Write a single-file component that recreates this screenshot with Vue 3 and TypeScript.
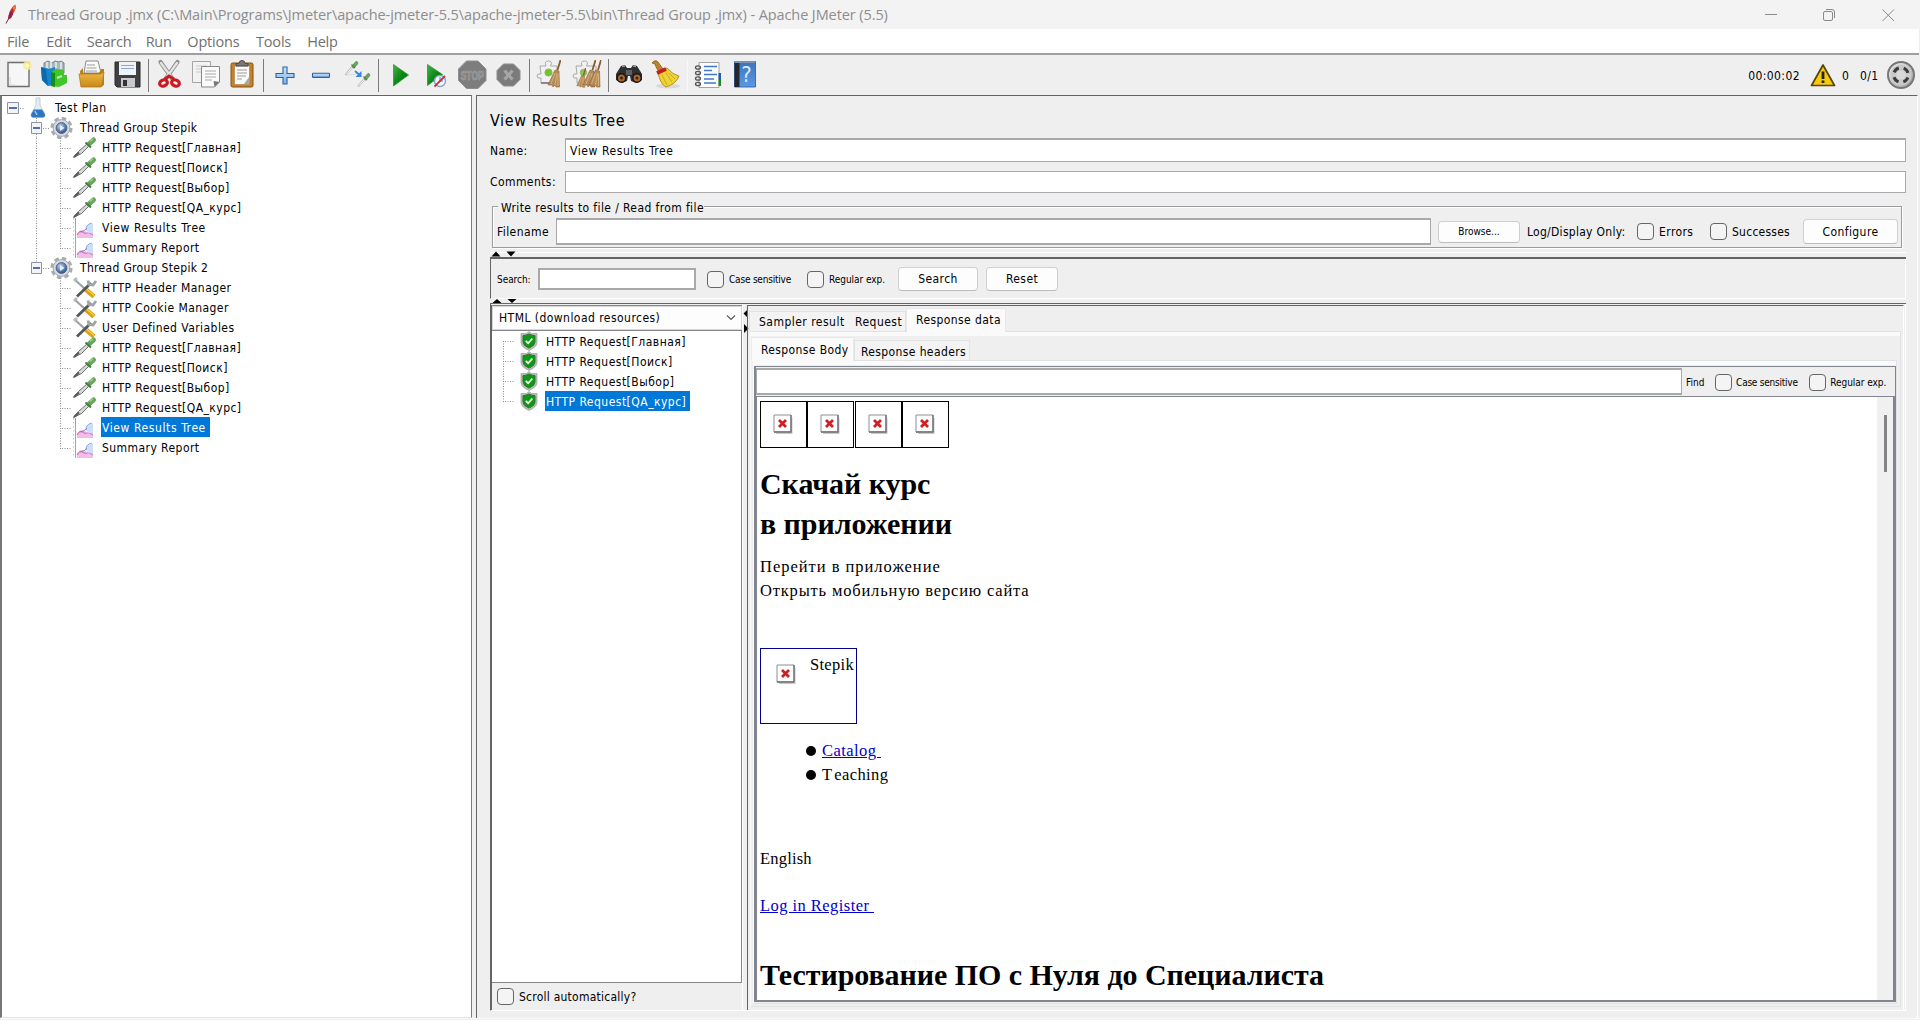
<script setup lang="ts">
type Kind = 'plan' | 'group' | 'sampler' | 'config' | 'listener'

interface TreeNode {
  label: string
  kind: Kind
  inFirstGroup?: boolean
  last?: boolean
  selected?: boolean
}

const menu = ['File', 'Edit', 'Search', 'Run', 'Options', 'Tools', 'Help']

const samplers = ['HTTP Request[Главная]', 'HTTP Request[Поиск]', 'HTTP Request[Выбор]', 'HTTP Request[QA_курс]']

const tree: TreeNode[] = [
  { label: 'Test Plan', kind: 'plan' },
  { label: 'Thread Group Stepik', kind: 'group' },
  ...samplers.map((label): TreeNode => ({ label, kind: 'sampler', inFirstGroup: true })),
  { label: 'View Results Tree', kind: 'listener', inFirstGroup: true },
  { label: 'Summary Report', kind: 'listener', inFirstGroup: true, last: true },
  { label: 'Thread Group Stepik 2', kind: 'group', last: true },
  { label: 'HTTP Header Manager', kind: 'config' },
  { label: 'HTTP Cookie Manager', kind: 'config' },
  { label: 'User Defined Variables', kind: 'config' },
  ...samplers.map((label): TreeNode => ({ label, kind: 'sampler' })),
  { label: 'View Results Tree', kind: 'listener', selected: true },
  { label: 'Summary Report', kind: 'listener', last: true },
]

const indent: Record<Kind, number> = { plan: 52, group: 75, sampler: 99, config: 99, listener: 99 }
const selectedResult = 3
</script>

<template>
  <div class="window">
    <svg class="defs" width="0" height="0" aria-hidden="true">
      <defs>
        <linearGradient id="silver" x1="0" y1="0" x2="1" y2="1">
          <stop offset="0" stop-color="#f4f4f4" /><stop offset="1" stop-color="#9a9a9a" />
        </linearGradient>
        <linearGradient id="gold" x1="0" y1="0" x2="0" y2="1">
          <stop offset="0" stop-color="#efb848" /><stop offset="1" stop-color="#c88a17" />
        </linearGradient>
        <linearGradient id="leaf" x1="0" y1="0" x2="1" y2="1">
          <stop offset="0" stop-color="#4caf50" /><stop offset=".5" stop-color="#0b8a17" /><stop offset="1" stop-color="#0a6a12" />
        </linearGradient>
        <linearGradient id="blueplus" x1="0" y1="0" x2="0" y2="1">
          <stop offset="0" stop-color="#cfe4f8" /><stop offset="1" stop-color="#7fb2e6" />
        </linearGradient>
        <linearGradient id="book" x1="0" y1="0" x2="0" y2="1">
          <stop offset="0" stop-color="#3c74bd" /><stop offset="1" stop-color="#5b98e8" />
        </linearGradient>
        <radialGradient id="lens" cx=".4" cy=".35" r=".7">
          <stop offset="0" stop-color="#c5d6ee" /><stop offset=".6" stop-color="#5d80b8" /><stop offset="1" stop-color="#27457c" />
        </radialGradient>
        <symbol id="broken" viewBox="0 0 20 20">
          <path d="M3 20h15.500V4" fill="none" stroke="#c9c9c9" stroke-width="2" />
          <path d="M1 1h17v17H1z" fill="#fff" stroke="#8a8f94" />
          <path d="M18 1v17H1" fill="none" stroke="#6f6f6f" stroke-width="1.300" />
          <path d="M6 6l7 7M13 6l-7 7" stroke="#cf1f22" stroke-width="2.800" />
        </symbol>
        <symbol id="shield" viewBox="0 0 18 20">
          <path d="M9 .5l2.500 2h5.500v9q0 4.500-8 8-8-3.500-8-8v-9h5.500z" fill="#b9beb9" stroke="#9ba19b" stroke-width=".7" />
          <path d="M9 3q3 1.600 6 1.600v6.500q0 3.500-6 6-6-2.500-6-6V4.600Q6 4.600 9 3z" fill="#0a9a12" stroke="#3c6c3c" stroke-width="1" />
          <path d="M5.800 9.800l2.300 2.400 4.200-4.600" fill="none" stroke="#fff" stroke-width="1.700" />
        </symbol>
        <symbol id="broom" viewBox="0 0 14 28">
          <path d="M13.500 0l-3 10" stroke="#8b5a2b" stroke-width="1.800" />
          <path d="M8 10l4 1 .5 16H9l-1-2-2 2-1-2H1z" fill="#b58a58" stroke="#8b6337" stroke-width=".6" />
          <path d="M8 13l-4 11M10 13l-2 12M11 14l0 12" stroke="#e0c08c" stroke-width=".7" />
        </symbol>
      </defs>
    </svg>

    <header class="titlebar">
      <svg class="feather" width="14" height="22" viewBox="0 0 14 22">
        <path d="M1 20.500l3.500-6.500" stroke="#7a1f52" stroke-width="1" />
        <path d="M3 16.500Q4 6 9.500 2q2.500 1 .5 5L6 15z" fill="#c62a33" />
        <path d="M3 16.500q.5-5 2.500-8.500l2.500 3-2 4z" fill="#8c2158" />
        <path d="M7.500 4.500l2.500-3q2 1 .3 4.500l-1.500 2z" fill="#ec7a2b" />
      </svg>
      <span class="title">Thread Group .jmx (C:\Main\Programs\Jmeter\apache-jmeter-5.5\apache-jmeter-5.5\bin\Thread Group .jmx) - Apache JMeter (5.5)</span>
      <svg class="winctl" width="150" height="28" viewBox="0 0 150 28" fill="none" stroke="#8a8a8a">
        <path d="M15 13.500h12" />
        <rect x="73.500" y="10.500" width="9" height="9" rx="1.500" />
        <path d="M76 8.500h6q2.500 0 2.500 2.500v6" />
        <path d="M132.500 8.500l11.500 11.500M144 8.500l-11.500 11.500" />
      </svg>
    </header>

    <nav class="menubar"><span v-for="m in menu" :key="m">{{ m }}</span></nav>

    <div class="toolbar">
      <svg viewBox="0 0 36 36"><path d="M7 5.500h21v24H7z" fill="#f6f6f6" stroke="#6d6d6d" stroke-width="1.400" /><path d="M9 20v8h5" stroke="#d5d5d5" fill="none" /><circle cx="26.500" cy="8.500" r="4.500" fill="#f6ee94" opacity=".85" /><circle cx="26.500" cy="8.500" r="2" fill="#fff8b8" /></svg>
      <svg viewBox="0 0 36 36"><path d="M7 10V6l4-2 4 2 3-2 4 1 2-1 3 2v10H7z" fill="#a8b8bd" stroke="#72858c" /><path d="M10 5v6M14 4v7M19 5v6M24 5v7" stroke="#e8f0f2" stroke-width="1.500" /><path d="M4 10l8 2 6-2v18l-7 1-6-6z" fill="#1487cf" /><path d="M4 10l5 2 2 17-6-6z" fill="#0c69aa" /><path d="M14 15l5-3 8 1v5h3v8l-8 4-8-1z" fill="#41c52b" /><path d="M14 15l4 1v14l-4-1z" fill="#158d18" /><path d="M20 21l5-2" stroke="#bff0a8" stroke-width="2" /></svg>
      <svg viewBox="0 0 36 36"><path d="M11 16l2-12h12l3 12z" fill="#fbfbfb" stroke="#8a8a8a" /><path d="M14 8h8M13.500 11h10M13 14h11" stroke="#9b9b9b" /><path d="M7 14l3-3v5h16l2-4h3v16l-3 2H8z" fill="#b98015" /><path d="M6 17h21l4-2-2 14-1 1H8z" fill="url(#gold)" stroke="#a87516" stroke-width=".7" /></svg>
      <svg viewBox="0 0 36 36"><path d="M6 5h25v25H8l-2-2z" fill="#3e4043" stroke="#28292b" /><path d="M10 5h17v13H10z" fill="#eef3f9" /><path d="M12 8.500h13M12 11.500h13" stroke="#8aa9d2" stroke-width="1.200" /><path d="M12 21h14v9H12z" fill="#c7c9cc" /><path d="M14 23h4v6h-4z" fill="#333" /></svg>
      <i class="sep"></i>
      <svg viewBox="0 0 36 36"><path d="M8.500 5l12 17M25.500 5l-12 17" stroke="#8e8e8e" stroke-width="4.200" stroke-linecap="round" /><path d="M9 6l11 15M25 6L14 21" stroke="#e3e3e3" stroke-width="2.400" stroke-linecap="round" /><g fill="none" stroke="#cb1a20" stroke-width="3.200"><ellipse cx="11.500" cy="26" rx="4" ry="3" transform="rotate(-22 11.500 26)" /><ellipse cx="23.500" cy="26" rx="4" ry="3" transform="rotate(22 23.500 26)" /></g><path d="M13 22l4-3 5 3" stroke="#cb1a20" stroke-width="3" fill="none" /></svg>
      <svg viewBox="0 0 36 36"><path d="M4.500 4.500h18v21h-18z" fill="#f2f2f2" stroke="#a5a5a5" /><path d="M8 9h11M8 12h11M8 15h6" stroke="#c9c9c9" /><path d="M13.500 9.500h18V25l-5 5h-13z" fill="#fafafa" stroke="#888" /><path d="M17 14h11M17 17h11M17 20h11M17 23h7" stroke="#aaa" /><path d="M31.500 25l-6-1 1 6z" fill="#777" /></svg>
      <svg viewBox="0 0 36 36"><rect x="7" y="6" width="22" height="24" rx="1.500" fill="#c2812c" stroke="#87530f" /><path d="M10.500 9h15v18.500h-15z" fill="#fafafa" stroke="#a67a3c" stroke-width=".6" /><path d="M12 9V6.500h3q0-3 3-3t3 3h3V9z" fill="#75777a" stroke="#4d4f52" /><path d="M13 13h10M13 16h10M13 19h9M13 22h5" stroke="#9a9a9a" /><path d="M25 20l-5 7h5z" fill="#aaa" /></svg>
      <i class="sep"></i>
      <svg viewBox="0 0 36 36"><path d="M16 10h4v6.500h7v4h-7V27h-4v-6.500H9v-4h7z" fill="url(#blueplus)" stroke="#2a62a8" stroke-width="1.100" /></svg>
      <svg viewBox="0 0 36 36"><rect x="9.500" y="16.200" width="17" height="4.200" rx=".6" fill="url(#blueplus)" stroke="#2a62a8" stroke-width="1.100" /></svg>
      <svg viewBox="0 0 36 36"><path d="M6.500 18L14 9M19 29.500l7-8" stroke="#bfc3c0" stroke-width="2.200" /><path d="M7.500 17l6-7M20 28.500l6-7" stroke="#f4f4f4" stroke-width="1" /><path d="M14.500 9.500l3-3.500M26.500 21.500l3-3.500" stroke="#6ba15e" stroke-width="3.600" stroke-linecap="round" /><path d="M12.500 7.500l3.500 3.500M24.500 19.500l3.500 3.500" stroke="#567e4d" stroke-width="1.300" /><path d="M7 18l11-1" stroke="#d3dcec" /><path d="M16 14l4 3.500" stroke="#3d82e6" stroke-width="1.800" /><path d="M22.500 14v6h-6z" fill="#3d82e6" /></svg>
      <i class="sep"></i>
      <svg viewBox="0 0 36 36"><path d="M11.500 7.500l15 10.500-15 11z" fill="url(#leaf)" stroke="#2f9a34" stroke-width=".8" /></svg>
      <svg viewBox="0 0 36 36"><path d="M9.500 7.500l15 10-15 11z" fill="url(#leaf)" stroke="#2f9a34" stroke-width=".8" /><circle cx="22" cy="24" r="5.500" fill="#f4f6fb" stroke="#87a1cc" stroke-width="1.400" /><path d="M22 20v4h3" stroke="#5577ad" fill="none" /><path d="M16.500 29.500L27 19" stroke="#c53434" stroke-width="1.800" /></svg>
      <svg viewBox="0 0 36 36"><path d="M12.500 4h11.500l8 8v11.500l-8 8H12.500l-8-8V12z" fill="#7d7d7d" stroke="#8f8f8f" /><text x="18.200" y="22.500" text-anchor="middle" class="stop" textLength="23" lengthAdjust="spacingAndGlyphs">STOP</text></svg>
      <svg viewBox="0 0 36 36"><path d="M13.500 7h10l6.500 6.500v9L23.500 29h-10L7 22.500v-9z" fill="#7b7b7b" stroke="#8d8d8d" /><path d="M14.500 13.500l8 9M22.500 13.500l-8 9" stroke="#a6a6a6" stroke-width="3.200" /></svg>
      <i class="sep"></i>
      <svg viewBox="0 0 36 36"><path d="M7 9h6q-2-5 2.500-5t2 5H24v6h-1v11H8v-5q-4 1-4-2t4-2z" fill="#f0f1f0" stroke="#a8aaa8" /><path d="M8 26h9" stroke="#888" stroke-width="2" /><circle cx="15.500" cy="15.500" r="3.600" fill="#73c428" stroke="#8fb56c" /><use href="#broom" x="14" y="3" width="14" height="28" /></svg>
      <svg viewBox="0 0 36 36"><path d="M7 9h6q-2-5 2.500-5t2 5H27v6h-1v11H8v-5q-4 1-4-2t4-2z" fill="#f0f1f0" stroke="#a8aaa8" /><circle cx="14.500" cy="15.500" r="3.200" fill="#8cc455" stroke="#8fb56c" /><use href="#broom" x="7" y="11" width="10" height="20" /><use href="#broom" x="13" y="3" width="14" height="28" /><use href="#broom" x="18.500" y="3" width="14" height="28" /></svg>
      <i class="sep"></i>
      <svg viewBox="0 0 36 36"><path d="M9 9l4-1 2 3h4l2-3 4 1 5 8v6l-6 3-5-2-1-5h-2l-1 5-5 2-6-3v-6z" fill="#2e2f31" /><path d="M10 9.500l3-.5M21 9l3 .5" stroke="#999" stroke-width="1.600" /><circle cx="9.500" cy="21" r="4.200" fill="#a7662f" stroke="#161616" stroke-width="1.400" /><circle cx="25" cy="21" r="4.200" fill="#a7662f" stroke="#161616" stroke-width="1.400" /><circle cx="9.500" cy="21" r="1.500" fill="#3c2413" /><circle cx="25" cy="21" r="1.500" fill="#3c2413" /><path d="M14 13h6v5h-6z" fill="#5d6063" /></svg>
      <svg viewBox="0 0 36 36"><ellipse cx="20" cy="29" rx="12" ry="2.500" fill="#d9d9d9" /><path d="M4 6q3-4 6-1l5 7-4 3q-3-4-4-8z" fill="#bd8132" stroke="#8b5c1b" stroke-width=".8" /><path d="M10 15l9-4q6 7 12 8-3 8-13 11-6-3-8-15z" fill="#efd334" stroke="#b59318" /><path d="M14 18l5 10M18 16l6 9M21 16l6 6" stroke="#c9a920" fill="none" /><path d="M9 16l9-4" stroke="#c41d1d" stroke-width="3.600" /></svg>
      <i class="sep faint"></i>
      <svg viewBox="0 0 36 36"><path d="M8 5.500h20v25H8z" fill="#fdfdfd" stroke="#a3a3a3" /><path d="M13 9.500h13M13 13.500h8M13 17.500h13M13 22h10M13 26h12" stroke="#3f79c4" stroke-width="1.300" /><path d="M27.500 16h2.500v7h-2.500z" fill="#2260ad" /><path d="M27.500 23h2.500v6h-2.500z" fill="#1d8a25" /><g fill="none" stroke="#555" stroke-width="1.300"><ellipse cx="7" cy="10.500" rx="2.500" ry="1.700" /><ellipse cx="7" cy="16" rx="2.500" ry="1.700" /><ellipse cx="7" cy="21.500" rx="2.500" ry="1.700" /><ellipse cx="7" cy="27" rx="2.500" ry="1.700" /></g></svg>
      <svg viewBox="0 0 36 36"><path d="M7.500 4.500h21V30h-21z" fill="url(#book)" stroke="#2b559a" stroke-width=".8" /><path d="M7.500 6h5v24h-5z" fill="#22272e" /><path d="M8 5h20" stroke="#8f9eb4" stroke-width="1.500" /><text x="19.500" y="25" text-anchor="middle" class="qmark">?</text></svg>
      <div class="status">
        <span class="time">00:00:02</span>
        <svg class="warn" width="26" height="24" viewBox="0 0 26 24"><path d="M13 2l11.500 20.500h-23z" fill="#f7cb07" stroke="#57430a" stroke-width="1.700" stroke-linejoin="round" /><path d="M13 8.500v7.500" stroke="#222" stroke-width="2.800" /><path d="M13 17.500V20" stroke="#222" stroke-width="2.800" /></svg>
        <span class="errs">0</span><span class="thr">0/1</span>
        <svg class="ring" width="30" height="30" viewBox="0 0 30 30"><circle cx="15" cy="15" r="13" fill="url(#silver)" stroke="#777" stroke-width="2" /><circle cx="15" cy="15" r="10.500" fill="#c9c9c9" /><circle cx="15" cy="15" r="7.300" fill="none" stroke="#3b3b3b" stroke-width="3" stroke-dasharray="6.500 4.970" stroke-dashoffset="-2.500" /><circle cx="15" cy="15" r="4.500" fill="#d9d9d9" /></svg>
      </div>
    </div>

    <div class="body">
      <aside class="tree">
        <div v-for="(n, i) in tree" :key="i" class="row">
          <svg :width="indent[n.kind]" height="20" :viewBox="`2 0 ${indent[n.kind]} 20`">
            <template v-if="n.kind === 'plan'">
              <path d="M7.500 4.500h11v11h-11z" fill="#f3f4f8" stroke="#8d93a0" /><path d="M9 10h8" stroke="#2a5098" stroke-width="1.600" />
              <path d="M20 10.500h4" class="dot" />
              <path d="M36 0h4v7l5 9q.5 3-2 3H33q-2.500 0-2-3l5-9z" fill="#e3edf5" stroke="#b9c5d0" stroke-width=".8" />
              <path d="M34 11.500h8l3 5q0 3-2 3H33q-2 0-2-3z" fill="#2e76c0" /><path d="M35 13l2 4" stroke="#9cc8f0" stroke-width="1.500" />
            </template>
            <template v-else-if="n.kind === 'group'">
              <path d="M36.500 0v5" class="dot" /><path v-if="!n.last" d="M36.500 16v4" class="dot" />
              <path d="M31.500 4.500h10v11h-10z" fill="#f3f4f8" stroke="#8d93a0" /><path d="M33 10h7" stroke="#2a5098" stroke-width="1.600" />
              <path d="M43 10.500h7" class="dot" />
              <circle cx="61.500" cy="10" r="9.300" fill="none" stroke="#a9adb0" stroke-width="3.600" stroke-dasharray="4.300 3" />
              <circle cx="61.500" cy="10" r="8.400" fill="#d7dade" stroke="#a4a8ac" />
              <circle cx="61.500" cy="10" r="5.400" fill="url(#lens)" stroke="#4f6488" /><path d="M60 7l4.500 3-4.500 3z" fill="#e6effb" />
            </template>
            <template v-else>
              <path v-if="n.inFirstGroup" d="M36.500 0v20" class="dot" />
              <path :d="n.last ? 'M60.500 0v11' : 'M60.500 0v20'" class="dot" /><path d="M62 10.500h9" class="dot" />
              <g v-if="n.kind === 'sampler'">
                <path d="M73.500 19.500l5-6 9-8 2 2-8 8z" fill="#d6d9d8" stroke="#6d706f" stroke-width="1" />
                <path d="M74 19l5-4.500" stroke="#55585a" stroke-width="2" />
                <path d="M89 6l4.500-4" stroke="#68a55a" stroke-width="5" stroke-linecap="round" /><path d="M85.500 4.500l5.500 5" stroke="#4a7d46" stroke-width="2" /><path d="M90 3.500l3-2.500" stroke="#9bd08b" stroke-width="1.500" />
              </g>
              <g v-else-if="n.kind === 'config'">
                <path d="M84 10l10 8.500" stroke="#dba010" stroke-width="4.800" /><path d="M86 10.500l8 7" stroke="#f6cf4b" stroke-width="1.400" />
                <path d="M74 1l11 10" stroke="#9aa0a3" stroke-width="2" /><path d="M74 3l3-3" stroke="#b9bdc0" stroke-width="2.500" />
                <path d="M77 18.500L91 5" stroke="#55585b" stroke-width="2.800" /><path d="M88 2.500l1 4 4 .5 3-4" stroke="#9fa4a8" stroke-width="2.800" fill="none" />
              </g>
              <g v-else>
                <path d="M73.500 0v20" stroke="#c9c9c9" stroke-dasharray="1.500 2.500" /><path d="M75.500 0v20" stroke="#a2a2a2" />
                <path d="M77 20v-5q3-3 5-3 4 0 5 3h6v5z" fill="#f3bdea" /><path d="M77 17q3-5 5.500-3t4.500 1 6 2" stroke="#d37cc2" fill="none" stroke-width="1.200" />
                <path d="M93 5.500q-7 .5-7 6 .5 3.500 7 4z" fill="#cddff7" /><path d="M92 5q-6 1-6 6.500" stroke="#86a7dd" fill="none" /><path d="M80 14q4-.5 7-3.500" stroke="#8d7fc4" fill="none" />
              </g>
            </template>
          </svg>
          <span class="label" :class="{ sel: n.selected, wide: n.kind !== 'group', tight: n.label.endsWith('Tree') }">{{ n.label }}</span>
        </div>
      </aside>

      <main class="panel">
        <h1>View Results Tree</h1>
        <div class="field"><label>Name:</label><div class="input name">View Results Tree</div></div>
        <div class="field second"><label>Comments:</label><div class="input comments"></div></div>

        <section class="filebox">
          <span class="legend">Write results to file / Read from file</span>
          <label class="fn">Filename</label>
          <div class="input file"></div>
          <button class="btn browse">Browse...</button>
          <span class="log">Log/Display Only:</span>
          <i class="chk"></i><span class="errors">Errors</span>
          <i class="chk"></i><span class="succ">Successes</span>
          <button class="btn conf">Configure</button>
        </section>

        <div class="divider first"><svg width="30" height="6" viewBox="0 0 30 6"><path d="M1.500 5.500h9L6 .5zM16.500 .5h9L21 5.500z" /></svg></div>

        <section class="search">
          <span class="sm lab">Search:</span>
          <div class="input q"></div>
          <i class="chk"></i><span class="sm cs">Case sensitive</span>
          <i class="chk"></i><span class="sm re">Regular exp.</span>
          <button class="btn b1">Search</button>
          <button class="btn b2">Reset</button>
        </section>

        <div class="divider second"><svg width="30" height="5" viewBox="0 0 30 5"><path d="M2.500 4h9L7 0zM17.500 0h9L22 4z" /></svg></div>

        <div class="split">
          <section class="results">
            <div class="combo"><span>HTML (download resources)</span>
              <svg width="10" height="8" viewBox="0 0 10 8"><path d="M1 1.500l4 4 4-4" fill="none" stroke="#555" stroke-width="1.100" /></svg>
            </div>
            <div class="list">
              <div v-for="(s, i) in samplers" :key="s" class="row">
                <svg width="53" height="20" viewBox="0 0 53 20">
                  <path :d="i === 3 ? 'M11.500 0v11' : i === 0 ? 'M11.500 10v10' : 'M11.500 0v20'" class="dot" /><path d="M13 10.500h9" class="dot" />
                  <use href="#shield" x="28" y="0" width="18" height="20" />
                </svg>
                <span class="label wide" :class="{ sel: i === selectedResult }">{{ s }}</span>
              </div>
            </div>
            <div class="scroll"><i class="chk"></i><span>Scroll automatically?</span></div>
          </section>

          <div class="gutter"><svg width="6" height="30" viewBox="0 0 6 30"><path d="M5 1v9L.5 5.500zM1 16v9l4.500-4.500z" /></svg></div>

          <section class="data">
            <div class="tabs outer">
              <span class="tab t1">Sampler result</span><span class="tab t2">Request</span><span class="tab t3 on">Response data</span>
            </div>
            <div class="page">
              <div class="tabs inner">
                <span class="tab u1 on">Response Body</span><span class="tab u2">Response headers</span>
              </div>
              <div class="page in">
                <div class="viewer">
                  <div class="find">
                    <div class="input fq"></div>
                    <span class="sm ft">Find</span>
                    <i class="chk"></i><span class="sm cs">Case sensitive</span>
                    <i class="chk"></i><span class="sm re">Regular exp.</span>
                  </div>
                  <div class="docwrap">
                    <article class="doc">
                      <div class="imgs">
                        <div v-for="k in 4" :key="k" class="img"><svg width="20" height="20"><use href="#broken" /></svg></div>
                      </div>
                      <h2>Скачай курс<br />в приложении</h2>
                      <p class="cyr">Перейти в приложение<br /><span class="cyr2">Открыть мобильную версию сайта</span></p>
                      <div class="logo"><svg width="20" height="20"><use href="#broken" /></svg><span>Stepik</span></div>
                      <ul>
                        <li><i></i><a class="cat">Catalog&nbsp;</a></li>
                        <li><i></i><span class="teach">Teaching</span></li>
                      </ul>
                      <p class="lang">English</p>
                      <p class="login"><a>Log in Register&nbsp;</a></p>
                      <h2 class="course">Тестирование ПО с Нуля до Специалиста</h2>
                    </article>
                    <div class="track"><div class="thumb"></div></div>
                  </div>
                </div>
              </div>
            </div>
          </section>
        </div>
      </main>
    </div>
  </div>
</template>

<style>
body { background: #efefef; }
</style>

<style scoped>
* { box-sizing: border-box; }
.window { width: 1920px; height: 1020px; overflow: hidden; background: #efefef; display: flex; flex-direction: column; color: #000; font: 12px/16px "DejaVu Sans Condensed", "DejaVu Sans", sans-serif; letter-spacing: .42px; white-space: nowrap; }
.defs { position: absolute; }
svg { display: block; flex: none; overflow: visible; }
.titlebar { flex: none; height: 29px; background: #f3f3f3; display: flex; align-items: center; padding-left: 5px; }
.feather { margin: -2px 9px 0 0; }
.title, .menubar { font-family: "Open Sans", "Noto Sans", sans-serif; font-size: 14.5px; letter-spacing: -.09px; color: #8d8d8d; }
.title { line-height: 20px; margin-top: 1px; }
.winctl { margin-left: auto; margin-right: 20px; }
.menubar { flex: none; height: 26px; background: #fff; border-bottom: 2px solid #9f9f9f; display: flex; align-items: center; gap: 15.600px; padding: 1px 0 0 7px; color: #707070; letter-spacing: -.2px; margin-right: 1px; }
.menubar span:nth-child(2) { margin-left: 1.500px; }
.menubar span:nth-child(4) { margin-left: -1.500px; }
.menubar span:nth-child(6) { margin-left: 1px; }
.menubar span:nth-child(7) { margin-left: .5px; }
.toolbar { flex: none; height: 40px; display: flex; align-items: flex-start; padding: 2px 4px 0 1px; }
.toolbar > svg { width: 36px; height: 36px; }
.sep { flex: none; width: 1px; height: 33px; margin: 2px 3px 0; background: #7a7a7a; }
.sep.faint { background: #f7f7f7; }
.stop { font: bold 12px "Liberation Sans", sans-serif; fill: #8a8a8a; stroke: #a5a5a5; stroke-width: .6px; letter-spacing: 0; }
.qmark { font: 22px "DejaVu Sans Condensed", sans-serif; fill: #dcecff; letter-spacing: 0; }
.status { margin-left: auto; display: flex; align-items: center; height: 36px; }
.status span { margin-top: 1px; }
.warn { margin: 0 6px 0 10px; }
.errs { width: 18px; }
.thr { width: 26px; }

.body { flex: none; height: 924px; display: flex; border-bottom: 1px solid #fafafa; }
.tree { flex: none; width: 472px; background: #fff; border: 1px solid #646464; border-left: 2px solid #73777a; border-right-color: #7c7c7c; border-bottom: 1px solid #e4e4e4; padding-top: 1px; }
.row { height: 20px; display: flex; align-items: center; }
.tree .row > svg { margin-top: 2px; }
.dot { stroke: #8c8c8c; stroke-dasharray: 1 1.500; fill: none; }
.label { height: 20px; line-height: 23px; padding: 0 4px 0 1px; }
.label.wide { letter-spacing: .48px; }
.tree .label.wide:not(.tight) { letter-spacing: .44px; }
.tree .label:not(.wide) { letter-spacing: .32px; padding-left: 3px; }
.label.tight { letter-spacing: .6px; padding-right: 4px; }
.sel { background: #0078d7; color: #fff; }
.tree .sel { line-height: 22px; }

.panel { margin-left: 4px; flex: 1; min-width: 0; border-top: 1px solid #646464; border-left: 1px solid #646464; border-right: 1px solid #fff; margin-right: 2px; padding: 0 11px 7px 13px; display: flex; flex-direction: column; }
h1 { font: 16px/20px "DejaVu Sans Condensed", "DejaVu Sans", sans-serif; letter-spacing: .6px; margin: 17px 0 9px; height: 16px; display: flex; align-items: center; }
.field { display: flex; align-items: center; height: 24px; }
.field label { width: 75px; padding-top: 1px; }
.field.second { margin-top: 9px; height: 22px; }
.field.second label { padding: 0; }
.input { background: #fff; border: 1px solid #a9a9ac; flex: none; }
.input.name { flex: 1; height: 24px; border-top-width: 2px; padding-left: 4px; line-height: 22px; letter-spacing: .58px; }
.input.comments { flex: 1; height: 22px; }
.filebox { position: relative; margin: 13px 4px 0 2px; height: 42px; border: 1px solid #9c9ca0; box-shadow: 1px 1px 0 #fff, inset 1px 1px 0 #fff; display: flex; align-items: center; padding: 9px 3px 0 4px; }
.legend { position: absolute; left: 5px; top: -7px; background: #efefef; padding: 0 0 0 3px; height: 14px; line-height: 16px; letter-spacing: .39px; }
.fn { width: 59px; }
.input.file { width: 875px; height: 27px; border-width: 2px 1px 2px; }
.btn { flex: none; font: inherit; letter-spacing: inherit; color: #000; background: #fdfdfd; border: 1px solid #d0d0d0; border-bottom-color: #bcbcbc; border-radius: 4px; padding: 0; text-align: center; }
.browse { margin-left: 7px; width: 82px; height: 22px; font-size: 10px; letter-spacing: 0; }
.log { margin-left: 7px; width: 110px; letter-spacing: .28px; }
.chk { flex: none; display: block; width: 17px; height: 17px; margin-right: -1px; border: 1px solid #666; border-radius: 4px; background: #f4f4f4; }
.errors { margin-left: 6px; width: 51px; }
.succ { margin-left: 6px; width: 71px; letter-spacing: .25px; }
.conf { width: 95px; height: 25px; }

.divider { flex: none; display: flex; }
.divider.first { height: 11px; border-bottom: 2px solid #646464; padding-top: 3px; background: linear-gradient(#fff, #fff) 0 4px / 100% 1px no-repeat; }
.divider.second { height: 5px; border-bottom: 1px solid #646464; }
.search { flex: none; height: 40px; border-left: 1px solid #646464; border-right: 1px solid #fff; border-bottom: 1px solid #fff; display: flex; align-items: center; padding: 1px 0 0 6px; }
.sm { font-size: 10px; line-height: 16px; letter-spacing: -.2px; padding-top: 1px; }
.lab { width: 41px; letter-spacing: -.05px; }
.input.q { width: 158px; height: 22px; border-width: 2px; }
.q + .chk { margin-left: 11px; }
.cs { margin-left: 6px; width: 78px; }
.re { margin-left: 6px; width: 69px; letter-spacing: -.05px; }
.search .b1 { width: 80px; height: 24px; }
.search .b2 { width: 72px; height: 24px; margin-left: 8px; }

.split { flex: 1; min-height: 0; display: flex; border-left: 1px solid #646464; border-bottom: 1px solid #fff; border-right: 1px solid #fff; padding-top: 1px; }
.results { flex: none; width: 251px; display: flex; flex-direction: column; border-left: 1px solid #646464; border-top: 1px solid #888; }
.combo { flex: none; height: 24px; background: #fdfdfd; border: 1px solid #d6d6d6; display: flex; align-items: center; justify-content: space-between; padding: 0 5px 0 6px; letter-spacing: .46px; }
.list { flex: 1; background: #fff; border: 1px solid #85858a; border-left-width: 0; }
.scroll { flex: none; height: 27px; display: flex; align-items: center; padding-left: 5px; }
.scroll span { margin-left: 6px; letter-spacing: .24px; }
.gutter { flex: none; width: 5px; border-left: 1px solid #fff; padding-top: 3px; }
.data { flex: 1; min-width: 0; border: 1px solid #646464; border-right-color: #fff; border-bottom: 0; margin: 0 1px 0 0; padding: 2px 2px 3px 2px; display: flex; flex-direction: column; }
.tabs { flex: none; display: flex; align-items: flex-end; position: relative; z-index: 1; }
.tab { background: #f3f3f3; border: 1px solid #e2e2e2; border-bottom: 0; text-align: left; }
.tab.on { background: #fafafa; border-color: #e8e8e8; }
.outer { height: 24px; }
.inner { height: 24px; margin-left: -2px; }
.t1, .t2 { height: 20px; line-height: 20px; margin-bottom: 1px; letter-spacing: .48px; }
.t1 { width: 98px; padding-left: 9px; border-right: 0; margin-left: -1px; }
.t2 { width: 59px; padding-left: 8px; border-left: 0; }
.t3 { width: 100px; height: 24px; line-height: 22px; padding-left: 9px; }
.page { flex: 1; min-height: 0; margin: -1px 0 0; border: 1px solid #e2e2e2; border-left-color: #fafafa; background: #efefef; box-shadow: inset 0 4px 0 #fafafa; padding: 5px 3px 2px 2px; display: flex; flex-direction: column; }
.u1 { width: 103px; height: 24px; line-height: 24px; padding-left: 9px; letter-spacing: .38px; }
.u2 { width: 116px; height: 20px; line-height: 22px; padding-left: 6px; margin-bottom: 1px; letter-spacing: .38px; }
.page.in { padding: 5px 0 1px 0; }
.viewer { flex: 1; min-height: 0; border: 1px solid #80858f; border-left-width: 2px; display: flex; flex-direction: column; background: #fff; }
.find { flex: none; height: 30px; background: #efefef; border-bottom: 1px solid #80858f; display: flex; align-items: center; }
.find .sm { padding-top: 2px; }
.find .chk { margin-top: 1px; }
.input.fq { width: 926px; height: 27px; border-width: 2px 1px; }
.ft { margin-left: 4px; width: 31px; letter-spacing: 0; }
.find .cs { width: 78px; margin-left: 5px; letter-spacing: -.23px; }
.find .re { margin-left: 5px; }
.docwrap { flex: 1; min-height: 0; display: flex; border: solid #80858f; border-width: 0 2px 1px 1px; overflow: hidden; }
.doc { flex: 1; padding: 4px 0 0 3px; font: 16.500px/24px "Liberation Serif", serif; letter-spacing: .3px; }
.imgs { display: flex; }
.img { width: 47px; height: 47px; border: 1px solid #000; padding: 12px; }
.img:nth-child(3) { margin-left: 1px; }
h2 { font: bold 30px/40px "Liberation Serif", serif; letter-spacing: -.05px; margin: 16px 0 0; }
p { margin: 0; }
.cyr { margin-top: 11px; letter-spacing: .98px; }
.cyr2 { letter-spacing: .82px; }
.logo { width: 97px; height: 76px; margin-top: 45px; border: 1px solid #00008b; display: flex; padding: 15px 0 0 15px; }
.logo span { margin: -11px 0 0 14px; letter-spacing: .3px; }
ul { list-style: none; margin: 15px 0 0 46px; padding: 0; }
li { display: flex; align-items: center; height: 24px; }
li i { width: 10px; height: 10px; border-radius: 5px; background: #000; margin-right: 6px; }
a { color: #00c; text-decoration: underline; letter-spacing: .45px; }
.teach { display: block; letter-spacing: .4px; }
.teach::first-letter { letter-spacing: 2.200px; }
.lang { margin-top: 60px; letter-spacing: .2px; }
.login { margin-top: 23px; }
.course { margin-top: 37px; }
.track { width: 16px; background: #f0f0f0; }
.thumb { width: 3px; height: 57px; margin: 18px 0 0 7px; background: #858585; }
</style>
